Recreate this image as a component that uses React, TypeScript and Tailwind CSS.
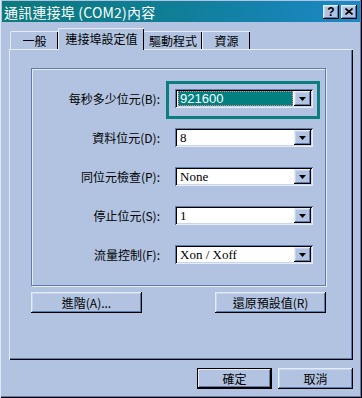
import React from "react";

const raised =
  "shadow-[inset_-1px_-1px_#000,inset_1px_1px_#e4ecf8,inset_-2px_-2px_#5f7bab,inset_2px_2px_#c9d6ea]";
const sunken =
  "shadow-[inset_1px_1px_#5f7bab,inset_-1px_-1px_#e4ecf8,inset_2px_2px_#000,inset_-2px_-2px_#c9d6ea]";

function Arrow() {
  return (
    <div className={`w-[17px] h-[15px] bg-[#b1c3e0] flex items-center justify-center ${raised}`}>
      <svg width="7" height="4" viewBox="0 0 7 4">
        <path d="M0 0h7L3.5 4z" fill="#000" />
      </svg>
    </div>
  );
}

function Combo({ value, selected }: { value: string; selected?: boolean }) {
  return (
    <div className={`w-[138px] h-[19px] bg-white flex items-center p-[2px] ${sunken}`}>
      <div className="flex-1 h-full flex items-center pl-[1px] pr-[1px]">
        {selected ? (
          <div className="w-full h-[15px] bg-[#008080] border border-dotted border-[#ff8080] flex items-center pl-[1px] text-white text-[13px] leading-none font-['Liberation_Sans',sans-serif]">
            {value}
          </div>
        ) : (
          <span className="pl-[2px] text-[13px] leading-none text-black font-['Liberation_Serif',serif]">
            {value}
          </span>
        )}
      </div>
      <Arrow />
    </div>
  );
}

function Row({ label, value, selected }: { label: string; value: string; selected?: boolean }) {
  return (
    <div className="flex items-center h-[19px]">
      <div className="w-[143px] text-right pr-[15px] text-[12px] text-black whitespace-nowrap">{label}</div>
      <Combo value={value} selected={selected} />
    </div>
  );
}

export default function App() {
  return (
    <div className="w-[362px] h-[398px] bg-[#b1c3e0] flex flex-col relative overflow-hidden shadow-[inset_1px_0_#dde7f5,inset_-1px_-1px_#000,inset_-2px_-2px_#5f7bab] font-['Noto_Sans_CJK_TC','Liberation_Sans',sans-serif]">
      {/* Title bar */}
      <div className="h-[21px] mx-[2px] mt-[1px] flex items-center justify-between bg-gradient-to-r from-[#0c7a7c] via-[#107e98] to-[#1c88c8] pl-[2px] pr-[3px]">
        <span className="text-white text-[14px] leading-none tracking-[0.2px]">通訊連接埠 (COM2)內容</span>
        <div className="flex gap-[2px]">
          <div className={`w-[16px] h-[14px] bg-[#b1c3e0] flex items-center justify-center text-[12px] font-bold leading-none text-black font-['Liberation_Sans',sans-serif] ${raised}`}>?</div>
          <div className={`w-[16px] h-[14px] bg-[#b1c3e0] flex items-center justify-center ${raised}`}>
            <svg width="8" height="7" viewBox="0 0 8 7">
              <path d="M0.5 0.5L7.5 6.5M7.5 0.5L0.5 6.5" stroke="#000" strokeWidth="1.6" />
            </svg>
          </div>
        </div>
      </div>

      {/* Tabs */}
      <div className="flex items-end ml-[10px] mt-[5px] h-[22px] relative z-10">
        <div className="w-[48px] h-[18px] border-t border-l border-[#e4ecf8] rounded-tl-[2px] shadow-[inset_-1px_0_#000] flex items-center justify-center text-[12px] text-black">一般</div>
        <div className="w-[86px] h-[22px] -mb-[1px] bg-[#b1c3e0] border-t border-l border-[#e4ecf8] rounded-tl-[2px] shadow-[inset_-1px_0_#000] flex items-center justify-center text-[12px] text-black pb-[2px]">連接埠設定值</div>
        <div className="w-[58px] h-[18px] border-t border-[#e4ecf8] shadow-[inset_-1px_0_#000] flex items-center justify-center text-[12px] text-black">驅動程式</div>
        <div className="w-[48px] h-[18px] border-t border-l border-[#e4ecf8] shadow-[inset_-1px_0_#000] flex items-center justify-center text-[12px] text-black">資源</div>
      </div>

      {/* Panel */}
      <div className="ml-[9px] w-[344px] h-[311px] border-t border-l border-[#e4ecf8] shadow-[inset_-1px_-1px_#000,inset_-2px_-2px_#5f7bab] pt-[18px] pl-[21px]">
        <div className="w-[295px] h-[218px] border border-[#5f7bab] shadow-[inset_1px_1px_#e4ecf8,1px_1px_#e4ecf8] flex flex-col pt-[20px] gap-[20px]">
          <div className="relative">
            <div className="absolute left-[134px] -top-[8px] w-[154px] h-[38px] border-[3px] border-[#0b7f80]" />
            <Row label="每秒多少位元(B):" value="921600" selected />
          </div>
          <Row label="資料位元(D):" value="8" />
          <Row label="同位元檢查(P):" value="None" />
          <Row label="停止位元(S):" value="1" />
          <Row label="流量控制(F):" value="Xon / Xoff" />
        </div>
        <div className="flex justify-between w-[295px] mt-[6px]">
          <div className={`w-[111px] h-[21px] flex items-center justify-center text-[12px] text-black ${raised}`}>進階(A)...</div>
          <div className={`w-[111px] h-[21px] flex items-center justify-center text-[12px] text-black ${raised}`}>還原預設值(R)</div>
        </div>
      </div>

      {/* Bottom buttons */}
      <div className="flex justify-end gap-[6px] mt-[8px] pr-[9px]">
        <div className={`w-[75px] h-[21px] flex items-center justify-center text-[12px] text-black border border-black shadow-[inset_-1px_-1px_#000,inset_1px_1px_#e4ecf8,inset_-2px_-2px_#5f7bab]`}>確定</div>
        <div className={`w-[75px] h-[21px] flex items-center justify-center text-[12px] text-black ${raised}`}>取消</div>
      </div>
    </div>
  );
}
